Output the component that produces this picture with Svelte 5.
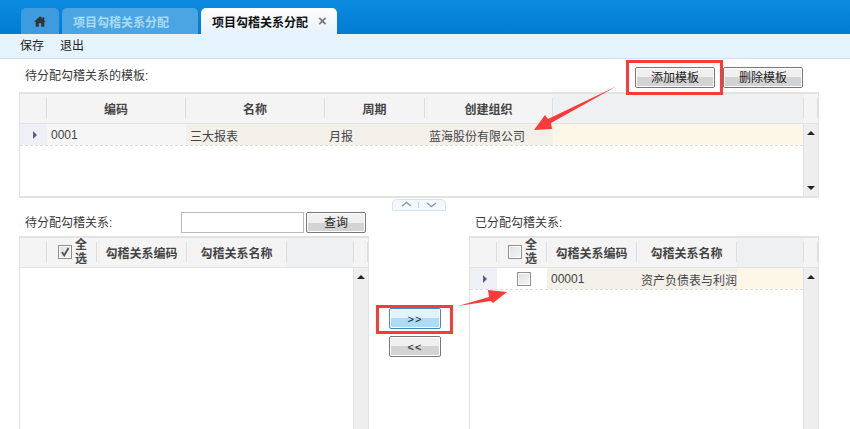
<script>
	// column layouts for the three grids
	const templateCols = [
		{ title: '编码', width: 139 },
		{ title: '名称', width: 139 },
		{ title: '周期', width: 100 },
		{ title: '创建组织', width: 128 }
	];
	const templateRow = ['0001', '三大报表', '月报', '蓝海股份有限公司'];
</script>

<div class="page">
	<div class="tabs">
		<div class="tab home">
			<svg width="12" height="11" viewBox="0 0 14 12"><path d="M7 0 L10 2.6 L10 1 L12 1 L12 4.4 L14 6.2 L12 6.2 L12 12 L8.5 12 L8.5 8 L5.5 8 L5.5 12 L2 12 L2 6.2 L0 6.2 Z" fill="#333" /></svg>
		</div>
		<div class="tab">项目勾稽关系分配</div>
		<div class="tab current">项目勾稽关系分配<span class="close">×</span></div>
	</div>

	<div class="toolbar">
		<span>保存</span>
		<span>退出</span>
	</div>

	<section class="upper">
		<div class="upper-head">
			<span class="label">待分配勾稽关系的模板:</span>
			<div class="upper-actions">
				<button class="btn tpl">添加模板</button>
				<button class="btn tpl">删除模板</button>
			</div>
		</div>
		<div class="grid upper-grid">
			<div class="grid-head">
				<div class="corner"></div>
				{#each templateCols as col}
					<div class="hcell" style="width: {col.width}px">{col.title}</div>
				{/each}
				<div class="hfill"></div>
				<div class="hend"></div>
			</div>
			<div class="grid-body">
				<div class="rows">
					<div class="row">
						<div class="rowhead"><i class="marker"></i></div>
						{#each templateCols as col, i}
							<div class="cell" class:plain={i === 0} style="width: {col.width}px">{templateRow[i]}</div>
						{/each}
						<div class="rfill"></div>
					</div>
				</div>
				<div class="scroll">
					<i class="up"></i>
					<i class="down"></i>
				</div>
			</div>
		</div>
	</section>

	<div class="splitter-wrap">
		<div class="splitter">
			<svg width="54" height="12" viewBox="0 0 54 12">
				<path d="M10 7 L14.5 3.5 L19 7" fill="none" stroke="#8c9aa8" stroke-width="1.4" />
				<path d="M26.5 3 V9" stroke="#c5d3de" stroke-width="1" />
				<path d="M35 4 L39.5 7.5 L44 4" fill="none" stroke="#8c9aa8" stroke-width="1.4" />
			</svg>
		</div>
	</div>

	<section class="lower">
		<div class="panel">
			<div class="panel-head">
				<span class="label">待分配勾稽关系:</span>
				<input class="search" type="text" />
				<button class="btn query">查询</button>
			</div>
			<div class="grid lower-grid">
				<div class="grid-head">
					<div class="corner"></div>
					<div class="hcell check-col">
						<span class="box checked">
							<svg width="12" height="12" viewBox="0 0 12 12"><path d="M3 6 L5.2 9.5 L9.5 2" fill="none" stroke="#555" stroke-width="1.8" /></svg>
						</span>
						<span class="all">全<br />选</span>
					</div>
					<div class="hcell" style="width: 90px">勾稽关系编码</div>
					<div class="hcell" style="width: 100px">勾稽关系名称</div>
					<div class="hfill"></div>
					<div class="hend"></div>
				</div>
				<div class="grid-body">
					<div class="rows"></div>
					<div class="scroll"><i class="up"></i></div>
				</div>
			</div>
		</div>

		<div class="transfer">
			<button class="btn move active">&gt;&gt;</button>
			<button class="btn move">&lt;&lt;</button>
		</div>

		<div class="panel">
			<div class="panel-head">
				<span class="label">已分配勾稽关系:</span>
			</div>
			<div class="grid lower-grid">
				<div class="grid-head">
					<div class="corner"></div>
					<div class="hcell check-col">
						<span class="box"></span>
						<span class="all">全<br />选</span>
					</div>
					<div class="hcell" style="width: 90px">勾稽关系编码</div>
					<div class="hcell" style="width: 100px">勾稽关系名称</div>
					<div class="hfill"></div>
					<div class="hend"></div>
				</div>
				<div class="grid-body">
					<div class="rows">
						<div class="row">
							<div class="rowhead"><i class="marker"></i></div>
							<div class="cell blank" style="width: 50px"><span class="box"></span></div>
							<div class="cell" style="width: 90px">00001</div>
							<div class="cell" style="width: 100px">资产负债表与利润</div>
							<div class="rfill"></div>
						</div>
					</div>
					<div class="scroll"><i class="up"></i></div>
				</div>
			</div>
		</div>
	</section>

	<!-- annotations drawn on top of the screenshot -->
	<div class="mark mark-add"></div>
	<div class="mark mark-move"></div>
	<svg class="arrows" width="850" height="429" viewBox="0 0 850 429">
		<polygon points="617,86 551,123 552,129 534,130 545,115 548,119" fill="#fb3a3a" />
		<polygon points="458,306 489,297 488,290 507,292 493,303 491,301" fill="#fb3a3a" />
	</svg>
</div>

<style>
	:global(body) {
		margin: 0;
	}

	.page {
		position: relative;
		width: 850px;
		height: 429px;
		overflow: hidden;
		background: #fff;
		font-family: "Liberation Sans", "Noto Sans CJK SC", sans-serif;
		font-size: 12px;
		color: #333;
	}

	/* Tabs */
	.tabs {
		display: flex;
		align-items: flex-end;
		gap: 3px;
		height: 34px;
		padding-left: 21px;
		background: linear-gradient(#0d8be0, #007cd3);
	}

	.tab {
		display: flex;
		align-items: center;
		box-sizing: border-box;
		width: 136px;
		height: 26px;
		padding-left: 11px;
		border-radius: 5px 5px 0 0;
		background: #4ba5e3;
		color: #a8dcf9;
		font-weight: 700;
	}

	.tab.home {
		justify-content: center;
		width: 38px;
		padding: 0;
		background: #3e9bdd;
	}

	.tab.current {
		background: linear-gradient(#fff, #e6f2fb);
		color: #111;
	}

	.close {
		margin-left: 10px;
		color: #777;
		font-size: 15px;
		line-height: 12px;
	}

	/* Toolbar */
	.toolbar {
		display: flex;
		gap: 16px;
		height: 24px;
		padding-left: 20px;
		border-bottom: 1px solid #cfe4fa;
		background: #e5f3fc;
		color: #222;
		line-height: 24px;
	}

	/* Upper section */
	.upper {
		padding: 0 31px 0 19px;
	}

	.upper-head {
		display: flex;
		justify-content: space-between;
		height: 33px;
	}

	.label {
		padding-left: 6px;
		color: #3a3a3a;
		line-height: 35px;
	}

	.upper-actions {
		display: flex;
		gap: 8px;
		padding: 8px 16px 0 0;
	}

	/* Buttons */
	.btn {
		box-sizing: border-box;
		height: 21px;
		padding: 0;
		border: 1px solid #777;
		border-radius: 2px;
		outline: 1px solid #fff;
		outline-offset: -2px;
		background: linear-gradient(#f0f0f0 50%, #d3d3d3 50%);
		color: #222;
		font-family: inherit;
		font-size: 12px;
		line-height: 18px;
	}

	.btn.tpl {
		width: 80px;
	}

	.btn.query {
		width: 60px;
		margin: 1px 0 0 2px;
	}

	.btn.move {
		width: 52px;
		font-size: 11px;
		letter-spacing: 1px;
	}

	.btn.active {
		border-color: #3f8dc5;
		background: linear-gradient(#e1f3fe 50%, #aedcf6 50%);
	}

	/* Grids */
	.grid {
		box-sizing: border-box;
		border: 1px solid #e2e2e2;
		border-width: 2px 1px 2px 1px;
		background: #fff;
	}

	.upper-grid {
		width: 800px;
		height: 106px;
	}

	.lower-grid {
		width: 350px;
		height: 220px;
	}

	.grid-head {
		display: flex;
		box-sizing: border-box;
		height: 30px;
		border-bottom: 1px solid #e2e2e2;
		background: #f4f4f4;
		font-weight: 700;
		color: #444;
	}

	.corner {
		box-sizing: border-box;
		flex: none;
		width: 27px;
		margin: 4px 0 5px;
		border-right: 1px solid #dedede;
	}

	.hcell {
		display: flex;
		align-items: center;
		justify-content: center;
		box-sizing: border-box;
		flex: none;
		margin: 4px 0 5px;
		border-right: 1px solid #dedede;
	}

	.check-col {
		width: 50px;
		gap: 3px;
		padding-left: 2px;
	}

	.all {
		line-height: 14px;
	}

	.hfill {
		flex: 1;
		background: #eff0f2;
	}

	.hend {
		box-sizing: border-box;
		flex: none;
		width: 15px;
		margin: 4px 0 5px;
		border-left: 1px solid #dedede;
		border-right: 1px solid #dedede;
	}

	.grid-body {
		display: flex;
		height: calc(100% - 30px);
	}

	.rows {
		flex: 1;
		min-width: 0;
	}

	.row {
		display: flex;
		box-sizing: border-box;
		height: 22px;
		border-bottom: 1px dashed #dcdcdc;
	}

	.rowhead {
		display: flex;
		align-items: center;
		justify-content: center;
		box-sizing: border-box;
		flex: none;
		width: 27px;
		background: #eff0f6;
	}

	.marker {
		width: 0;
		height: 0;
		margin-left: 2px;
		border-left: 4px solid #5d5b8d;
		border-top: 4px solid transparent;
		border-bottom: 4px solid transparent;
	}

	.cell {
		display: flex;
		align-items: center;
		box-sizing: border-box;
		flex: none;
		padding: 1px 0 0 4px;
		background: #f3f0ea;
		color: #444;
		white-space: nowrap;
		overflow: hidden;
	}

	.cell.plain {
		background: #f6f6f6;
	}

	.cell.blank {
		justify-content: center;
		padding: 0 0 0 4px;
		background: #fff;
	}

	.rfill {
		flex: 1;
		background: #fdf7e7;
	}

	.scroll {
		display: flex;
		flex-direction: column;
		justify-content: space-between;
		align-items: center;
		box-sizing: border-box;
		flex: none;
		width: 15px;
		padding: 7px 0 6px;
		border-left: 1px solid #e2e2e2;
		background: #eee;
	}

	.up,
	.down {
		width: 0;
		height: 0;
		border-left: 4px solid transparent;
		border-right: 4px solid transparent;
	}

	.up {
		border-bottom: 4px solid #222;
	}

	.down {
		border-top: 4px solid #222;
	}

	.box {
		display: flex;
		align-items: center;
		justify-content: center;
		box-sizing: border-box;
		flex: none;
		width: 14px;
		height: 14px;
		border: 1px solid #8f8f8f;
		outline: 1px solid #fff;
		outline-offset: -2px;
		background: linear-gradient(135deg, #dcdfe4, #f6f6f6);
	}

	/* Splitter */
	.splitter-wrap {
		display: flex;
		height: 13px;
		padding-left: 392px;
	}

	.splitter {
		box-sizing: border-box;
		width: 54px;
		height: 12px;
		margin-top: 1px;
		border: 1px solid #cfe6f7;
		border-radius: 5px 5px 0 0;
		background: #f3f9fe;
		line-height: 0;
	}

	.splitter svg {
		margin: -1px;
	}

	/* Lower section */
	.lower {
		display: flex;
		padding-left: 19px;
	}

	.panel {
		flex: none;
		width: 350px;
	}

	.panel-head {
		display: flex;
		height: 25px;
	}

	.panel-head .label {
		width: 156px;
		line-height: 25px;
	}

	.search {
		box-sizing: border-box;
		width: 123px;
		height: 21px;
		margin: 1px 0 0;
		padding: 0;
		border: 1px solid #bbb;
		background: #fff;
	}

	.transfer {
		display: flex;
		flex-direction: column;
		align-items: center;
		gap: 7px;
		flex: none;
		width: 100px;
		padding: 97px 8px 0 0;
		box-sizing: border-box;
	}

	/* Annotations */
	.mark {
		position: absolute;
		box-sizing: border-box;
		border: 3px solid #fb3a3a;
	}

	.mark-add {
		left: 626px;
		top: 60px;
		width: 97px;
		height: 35px;
	}

	.mark-move {
		left: 376px;
		top: 305px;
		width: 77px;
		height: 29px;
	}

	.arrows {
		position: absolute;
		left: 0;
		top: 0;
		pointer-events: none;
	}
</style>
